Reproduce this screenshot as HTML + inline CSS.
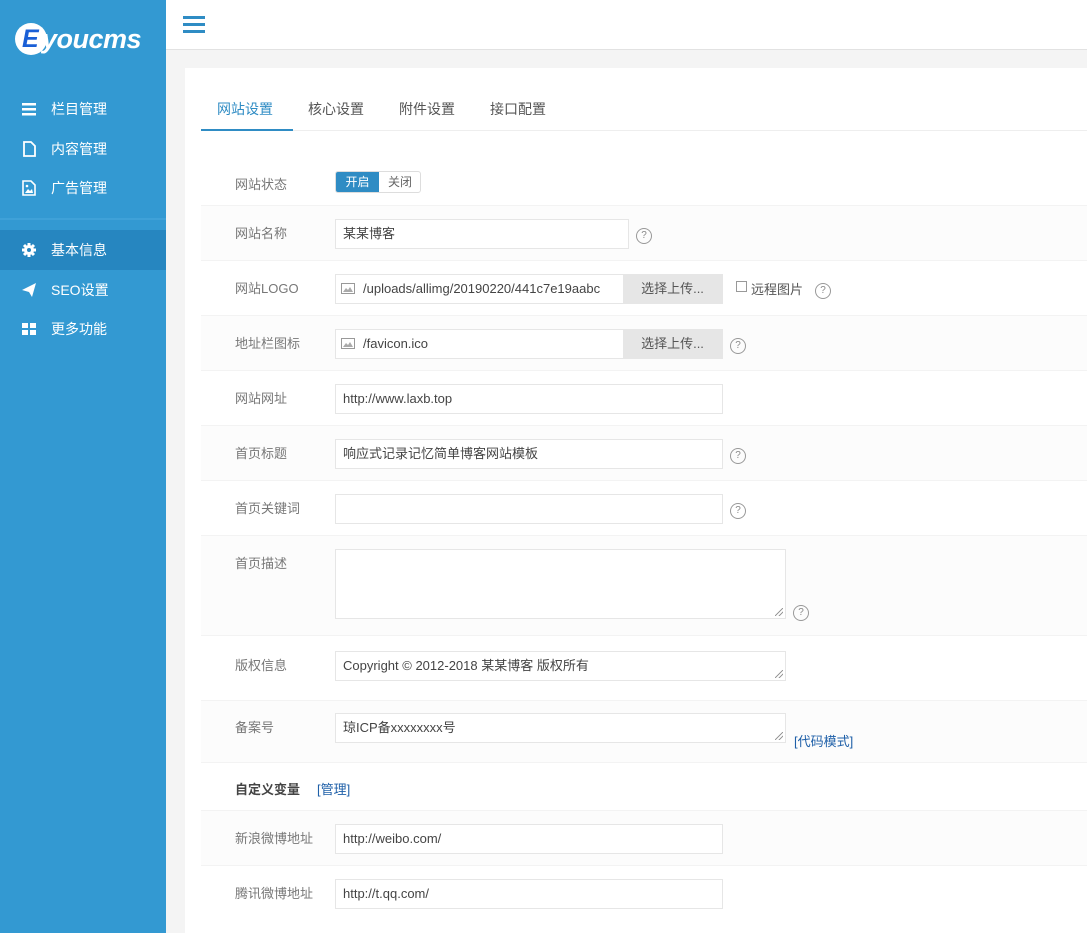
<!DOCTYPE html>
<html><head><meta charset="utf-8">
<style>
*{margin:0;padding:0;box-sizing:border-box}
body{width:1087px;height:933px;overflow:hidden;background:#f4f4f4;font-family:"Liberation Sans","Noto Sans CJK SC",sans-serif;font-size:13px;color:#333;position:relative}
.side{position:absolute;left:0;top:0;width:166px;height:933px;background:#3399d2}
.logo{position:absolute;left:15px;top:23px;}
.circ{position:absolute;left:0;top:0;width:32px;height:32px;border-radius:50%;background:#fff}
.circ b{position:absolute;left:7px;top:4px;font:bold italic 25px "Liberation Sans",sans-serif;color:#1a5fd6;line-height:25px}
.logo .t{position:absolute;left:27px;top:1px;font:bold italic 27px "Liberation Sans",sans-serif;color:#fff;white-space:nowrap;letter-spacing:-0.5px}
.nav{position:absolute;left:0;width:166px;height:40px;color:#fff;font-size:14px;line-height:40px;padding-left:51px}
.nav svg{position:absolute;left:21px;top:12px}
.nav.act{background:#2686c0}
.sep{position:absolute;left:0;top:218px;width:166px;height:2px;background:#3fa1d8}
.hdr{position:absolute;left:166px;top:0;right:0;height:50px;background:#fff;border-bottom:1px solid #e2e2e2}
.panel{position:absolute;left:185px;top:68px;right:0;bottom:0;background:#fff}
.tab{position:absolute;top:99px;font-size:14px;color:#555}
.tabline{position:absolute;left:201px;right:0;top:130px;height:1px;background:#eee}
.tabact{position:absolute;left:201px;width:92px;top:129px;height:2px;background:#2f8cc4}
.row{position:absolute;left:201px;right:0;border-top:1px solid #f3f3f3}
.row.g{background:#fcfcfc}
.lab{position:absolute;left:235px;color:#777;font-size:13px}
.inp{position:absolute;left:335px;height:30px;border:1px solid #e6e6e6;background:#fff;line-height:28px;padding-left:7px;color:#444;white-space:nowrap;overflow:hidden}
.btn{position:absolute;height:28px;width:99px;background:#e6e6e6;color:#555;text-align:center;line-height:28px}
.q{position:absolute;width:16px;height:16px;border:1px solid #999;border-radius:50%;font-size:10px;line-height:14px;text-align:center;color:#888}
.blue{color:#1e5fa8}
.rs{position:absolute;width:8px;height:8px;background:linear-gradient(135deg,transparent 45%,#999 45%,#999 55%,transparent 55%,transparent 70%,#999 70%,#999 80%,transparent 80%)}
</style></head><body>
<div class="side">
 <div class="logo"><div class="circ"><b>E</b></div><div class="t">youcms</div></div>
 <div class="nav" style="top:89px"><svg width="16" height="16"><rect x="1" y="2" width="14" height="2.5" fill="#fff"/><rect x="1" y="7" width="14" height="2.5" fill="#fff"/><rect x="1" y="12" width="14" height="2.5" fill="#fff"/></svg>栏目管理</div>
 <div class="nav" style="top:129px"><svg width="16" height="16"><path d="M3 1h7l4 4v10H3z" fill="none" stroke="#fff" stroke-width="1.8"/></svg>内容管理</div>
 <div class="nav" style="top:168px"><svg width="16" height="16"><path d="M2 1h8l4 4v10H2z" fill="none" stroke="#fff" stroke-width="1.6"/><path d="M4 13l3-4 2 2 2-2 1 4z" fill="#fff"/><circle cx="6" cy="6" r="1.3" fill="#fff"/></svg>广告管理</div>
 <div class="sep"></div>
 <div class="nav act" style="top:230px"><svg width="16" height="16"><circle cx="8" cy="8" r="5" fill="#fff"/><g stroke="#fff" stroke-width="3"><path d="M8 1v14M1 8h14M3 3l10 10M13 3L3 13"/></g><circle cx="8" cy="8" r="2" fill="#2686c0"/></svg>基本信息</div>
 <div class="nav" style="top:270px"><svg width="16" height="16"><path d="M1 8L15 1 11 15 8 10z" fill="#fff"/></svg>SEO设置</div>
 <div class="nav" style="top:309px"><svg width="16" height="16"><rect x="1" y="2" width="6" height="5" fill="#fff"/><rect x="9" y="2" width="6" height="5" fill="#fff"/><rect x="1" y="9" width="6" height="5" fill="#fff"/><rect x="9" y="9" width="6" height="5" fill="#fff"/></svg>更多功能</div>
</div>
<div class="hdr"><svg style="position:absolute;left:17px;top:16px" width="22" height="18"><rect y="0" width="22" height="3" fill="#2f8cc4"/><rect y="7" width="22" height="3" fill="#2f8cc4"/><rect y="14" width="22" height="3" fill="#2f8cc4"/></svg></div>
<div class="panel"></div>
<div class="tab" style="left:217px;color:#2f8cc4">网站设置</div>
<div class="tab" style="left:308px">核心设置</div>
<div class="tab" style="left:399px">附件设置</div>
<div class="tab" style="left:490px">接口配置</div>
<div class="tabline"></div><div class="tabact"></div>

<div class="row g" style="top:205px;height:55px"></div>
<div class="row" style="top:260px;height:55px"></div>
<div class="row g" style="top:315px;height:55px"></div>
<div class="row" style="top:370px;height:55px"></div>
<div class="row g" style="top:425px;height:55px"></div>
<div class="row" style="top:480px;height:55px"></div>
<div class="row g" style="top:535px;height:100px"></div>
<div class="row" style="top:635px;height:65px"></div>
<div class="row g" style="top:700px;height:62px"></div>
<div class="row" style="top:762px;height:48px"></div>
<div class="row g" style="top:810px;height:55px"></div>
<div class="row" style="top:865px;height:60px"></div>

<div class="lab" style="top:174px">网站状态</div>
<div style="position:absolute;left:335px;top:171px;width:86px;height:22px;border:1px solid #ddd;border-radius:3px;overflow:hidden;font-size:12px;line-height:20px">
 <div style="position:absolute;left:0;top:0;width:43px;height:22px;background:#2f8cc4;color:#fff;text-align:center">开启</div>
 <div style="position:absolute;left:43px;top:0;width:42px;color:#666;text-align:center">关闭</div></div>

<div class="lab" style="top:223px">网站名称</div>
<div class="inp" style="top:219px;width:294px">某某博客</div>
<div class="q" style="left:636px;top:228px">?</div>

<div class="lab" style="top:278px">网站LOGO</div>
<div class="inp" style="top:274px;width:388px;padding-left:27px">/uploads/allimg/20190220/441c7e19aabc</div>
<svg style="position:absolute;left:341px;top:283px" width="14" height="11"><rect x=".5" y=".5" width="13" height="10" fill="none" stroke="#999"/><path d="M2 9l3-4 2 2 2-3 3 5z" fill="#aaa"/></svg>
<div class="btn" style="left:623px;top:275px">选择上传...</div>
<div style="position:absolute;left:736px;top:281px;width:11px;height:11px;border:1px solid #999;background:#fff"></div>
<div style="position:absolute;left:751px;top:279px;color:#555">远程图片</div>
<div class="q" style="left:815px;top:283px">?</div>

<div class="lab" style="top:333px">地址栏图标</div>
<div class="inp" style="top:329px;width:388px;padding-left:27px">/favicon.ico</div>
<svg style="position:absolute;left:341px;top:338px" width="14" height="11"><rect x=".5" y=".5" width="13" height="10" fill="none" stroke="#999"/><path d="M2 9l3-4 2 2 2-3 3 5z" fill="#aaa"/></svg>
<div class="btn" style="left:623px;top:330px">选择上传...</div>
<div class="q" style="left:730px;top:338px">?</div>

<div class="lab" style="top:388px">网站网址</div>
<div class="inp" style="top:384px;width:388px">http://www.laxb.top</div>

<div class="lab" style="top:443px">首页标题</div>
<div class="inp" style="top:439px;width:388px">响应式记录记忆简单博客网站模板</div>
<div class="q" style="left:730px;top:448px">?</div>

<div class="lab" style="top:498px">首页关键词</div>
<div class="inp" style="top:494px;width:388px"></div>
<div class="q" style="left:730px;top:503px">?</div>

<div class="lab" style="top:553px">首页描述</div>
<div class="inp" style="top:549px;width:451px;height:70px"></div>
<div class="rs" style="left:775px;top:608px"></div>
<div class="q" style="left:793px;top:605px">?</div>

<div class="lab" style="top:655px">版权信息</div>
<div class="inp" style="top:651px;width:451px">Copyright © 2012-2018 某某博客 版权所有</div>
<div class="rs" style="left:775px;top:670px"></div>

<div class="lab" style="top:717px">备案号</div>
<div class="inp" style="top:713px;width:451px">琼ICP备xxxxxxxx号</div>
<div class="rs" style="left:775px;top:732px"></div>
<div class="blue" style="position:absolute;left:794px;top:731px">[代码模式]</div>

<div style="position:absolute;left:235px;top:779px;color:#444;font-weight:bold">自定义变量</div>
<div class="blue" style="position:absolute;left:317px;top:779px">[管理]</div>

<div class="lab" style="top:828px">新浪微博地址</div>
<div class="inp" style="top:824px;width:388px">http://weibo.com/</div>
<div class="lab" style="top:883px">腾讯微博地址</div>
<div class="inp" style="top:879px;width:388px">http://t.qq.com/</div>
</body></html>
